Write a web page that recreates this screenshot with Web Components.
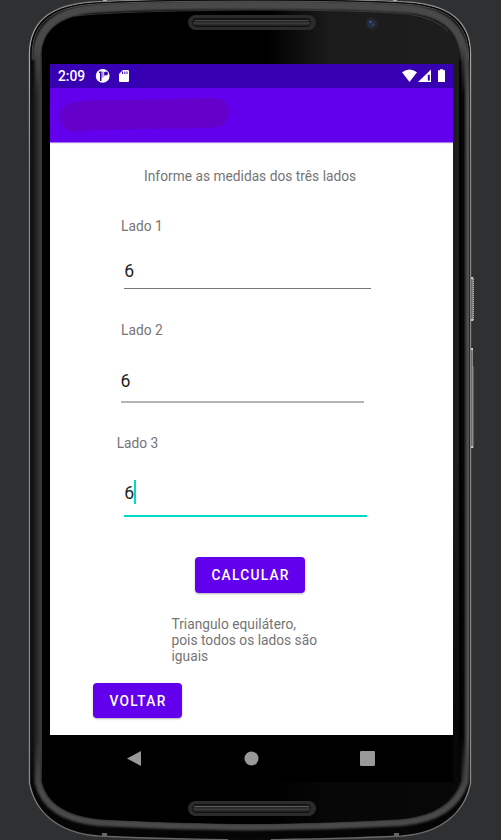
<!DOCTYPE html>
<html lang="pt-BR">
<head>
<meta charset="utf-8">
<title>Triângulo</title>
<style>
html,body{margin:0;width:501px;height:840px;overflow:hidden;background:#2f3032;font-family:Roboto,sans-serif}
</style>
</head>
<body>
<phone-frame>
  <status-bar>2:09</status-bar>
  <app-bar></app-bar>
  <triangle-form></triangle-form>
  <nav-bar></nav-bar>
</phone-frame>
<script>
const define = (name, html) => customElements.define(name, class extends HTMLElement {
  constructor() {
    super();
    const t = document.createElement('template');
    t.innerHTML = html;
    this.attachShadow({mode: 'open'}).append(t.content.cloneNode(true));
  }
});

define('phone-frame', `
<style>
:host{display:block;position:relative;box-sizing:border-box;width:501px;height:840px;padding:64px 48px 58px 50px;overflow:hidden}
svg{position:absolute;left:0;top:0}
.screen{position:relative;display:flex;flex-direction:column;width:403px;height:718px}
</style>
<svg width="501" height="840" viewBox="0 0 501 840">
  <defs>
    <linearGradient id="edge" x1="0" x2="0" y1="0" y2="1">
      <stop offset="0" stop-color="#858585"/><stop offset=".06" stop-color="#a8a8a8"/><stop offset=".2" stop-color="#8b8b8b"/><stop offset=".93" stop-color="#8b8b8b"/><stop offset="1" stop-color="#666"/>
    </linearGradient>
    <linearGradient id="gloss"><stop offset=".54" stop-color="#000"/><stop offset=".69" stop-color="#1b1b1b"/><stop offset="1" stop-color="#1d1d1d"/></linearGradient>
    <linearGradient id="fade" x1="0" x2="0" y1="0" y2="1"><stop offset=".55" stop-color="#000" stop-opacity="0"/><stop offset=".9" stop-color="#000" stop-opacity=".75"/></linearGradient>
    <linearGradient id="slot" x1="0" x2="0" y1="0" y2="1"><stop offset="0" stop-color="#111"/><stop offset=".45" stop-color="#2b2b2b"/><stop offset=".6" stop-color="#3b3b3b"/><stop offset="1" stop-color="#151515"/></linearGradient>
    <linearGradient id="btn"><stop offset="0" stop-color="#555"/><stop offset=".5" stop-color="#8a8a8a"/><stop offset="1" stop-color="#4a4a4a"/></linearGradient>
    <linearGradient id="railL"><stop offset="0" stop-color="#161616"/><stop offset=".2" stop-color="#111"/><stop offset=".75" stop-color="#323232"/><stop offset="1" stop-color="#3c3c3c"/></linearGradient>
    <linearGradient id="railR"><stop offset="0" stop-color="#000"/><stop offset=".4" stop-color="#060606"/><stop offset=".65" stop-color="#3c3c3c"/><stop offset=".85" stop-color="#595959"/><stop offset="1" stop-color="#111"/></linearGradient>
    <linearGradient id="ends" gradientUnits="userSpaceOnUse" x1="0" x2="0" y1="45" y2="790"><stop offset="0" stop-color="#000"/><stop offset=".07" stop-color="#fff"/><stop offset=".93" stop-color="#fff"/><stop offset="1" stop-color="#000"/></linearGradient>
    <mask id="railMask" maskUnits="userSpaceOnUse" x="0" y="0" width="501" height="840"><rect width="501" height="840" fill="url(#ends)"/></mask>
    <filter id="soft"><feGaussianBlur stdDeviation="1.1"/></filter>
    <clipPath id="body"><path d="M29.500 53C30 20 52 4 95 2Q150-1 250-1Q350-1 405 2C448 4 470 20 470.500 53V783C465 812 442 833 402 836Q340 839 250 840Q160 839 98 836C58 833 35 812 29.500 783Z"/></clipPath>
  </defs>
  <path d="M103 0h4v3h-4zM393 0h4v3h-4z" fill="#bbb"/>
  <path d="M471 277h3v44h-3z" fill="url(#btn)"/>
  <path d="M473.500 279V320" stroke="#aaa" stroke-dasharray="1 1"/>
  <path d="M471 348h2v18h1v82h-3z" fill="url(#btn)"/>
  <path d="M471 277h2v2h-2zM471 319h2v2h-2zM471 348h2v2h-2zM471 446h2v2h-2z" fill="#ccc"/>
  <path d="M29.500 53C30 20 52 4 95 2Q150-1 250-1Q350-1 405 2C448 4 470 20 470.500 53V783C465 812 442 833 402 836Q340 839 250 840Q160 839 98 836C58 833 35 812 29.500 783Z" fill="#050505" stroke="url(#edge)" stroke-width="1.300"/>
  <g clip-path="url(#body)">
    <path d="M36.500 60C37 27 57 11 96 8.500Q150 5 250 5Q350 5 404 8.500C443 11 463 27 465 60" fill="none" stroke="#484848" stroke-width="9" filter="url(#soft)"/>
    <path d="M32 60V53C33 22 54 6.500 95 4Q150 1 250 1Q350 1 405 4C446 6.500 467 22 468.500 53V60" fill="none" stroke="#606060" stroke-width=".8"/>
    <path d="M31 60V53C32 21 53 5.500 95 3Q150 0 250 0Q350 0 405 3C447 5.500 468 21 469.500 53V60" fill="none" stroke="#080808" stroke-width="1"/>
    <path d="M38 58V782C43 804 61 819 98 822.500Q160 826 250 827Q340 826 402 822.500C440 819 458 804 465 782V58" fill="none" stroke="#484848" stroke-width="7" filter="url(#soft)"/>
    <g mask="url(#railMask)">
      <rect x="30" y="45" width="12" height="745" fill="url(#railL)"/>
      <rect x="459" y="45" width="11" height="745" fill="url(#railR)"/>
    </g>
    <path d="M42 54C42 30 62 15 96 13.500Q150 10 250 10Q350 10 404 13.500C439 15 459 30 459 54V780C454 802 436 815 402 819Q340 823 250 824Q160 823 98 819C65 815 46 802 42 780Z" fill="url(#gloss)"/>
    <path d="M42 54C42 30 62 15 96 13.500Q150 10 250 10Q350 10 404 13.500C439 15 459 30 459 54V780C454 802 436 815 402 819Q340 823 250 824Q160 823 98 819C65 815 46 802 42 780Z" fill="url(#fade)"/>
    <path d="M75 16Q120 11 250 10Q360 10 408 14Q435 18 448 31" fill="none" stroke="#484848" stroke-width=".7"/>
  </g>
  <path d="M102 833h5v4h-5zM394 833h5v4h-5z" fill="#666"/>
  <rect x="188" y="15" width="128" height="15" rx="7.500" fill="#2b2b2b"/>
  <rect x="192.500" y="18.500" width="118" height="8" rx="4" fill="url(#slot)" stroke="#111"/>
  <path d="M195 20.500H309" stroke="#444"/>
  <rect x="188" y="801" width="128" height="15" rx="7.500" fill="#2b2b2b"/>
  <rect x="192.500" y="804.500" width="118" height="8" rx="4" fill="url(#slot)" stroke="#111"/>
  <path d="M194 806.500H309" stroke="#5c5c5c"/>
  <circle cx="372" cy="23.500" r="6.500" fill="#232323"/><circle cx="371.500" cy="23.500" r="4.500" fill="#252b43"/>
  <circle cx="370.500" cy="22" r="1.200" fill="#48588a"/><circle cx="373" cy="24.500" r="1" fill="#3d4a75"/>
  <rect x="228" y="838" width="43" height="2" rx="1" fill="#080808"/>
</svg>
<div class="screen"><slot></slot></div>`);

define('status-bar', `
<style>
:host{display:flex;align-items:center;box-sizing:border-box;height:24px;padding:0 7px 0 8px;background:#3700b3;color:#fff;font:500 13.800px/24px Roboto,sans-serif}
.time{width:37px;white-space:nowrap}
.sp{flex:1}
svg{display:block;flex:none}
</style>
<span class="time"><slot></slot></span>
<svg width="36" height="24" viewBox="0 0 36 24"><circle cx="7.700" cy="11.900" r="6.900" fill="#fff"/><path d="M4 7.500H6.500V17H5V9H4z" fill="#3700b3"/><path d="M6.500 7.500H8.500V13.500H6.500zM9 8h1v4H9z" fill="#3700b3" opacity=".45"/><circle cx="11" cy="9.500" r="1.900" fill="#3700b3"/><path d="M28 6h5q1 0 1 1v10q0 1-1 1h-8q-1 0-1-1V10z" fill="#fff"/><path d="M27.500 7.500v2.500M29.800 7.500v2.500M32 7.500v2.500" stroke="#3700b3"/></svg>
<span class="sp"></span>
<svg width="44" height="24" viewBox="0 0 44 24"><path d="M0 8.300Q7.500 2.800 15 8.300L7.500 18z" fill="#fff"/><path d="M16 18L29 5.500V18z" fill="#fff"/><path d="M25.800 10.800H27.800V16.600H25.800z" fill="#3700b3"/><path d="M36 6.300h2V5.200h3.300v1.100H43V18H36z" fill="#fff"/></svg>`);

define('app-bar', `
<style>
:host{display:block;height:54px;background:#6200ee;border-bottom:1px solid #ad78f2;box-shadow:0 1px 1px #00000012;position:relative;z-index:1}
svg{display:block}
</style>
<svg width="403" height="54" viewBox="0 0 403 54"><path d="M9.500 28Q11 16 24 14L46 12L105 11.500L162 9.800Q178 10 179 23Q178 38 163 40L96 41L45 42L26 44Q11 44 9.500 28Z" fill="#6500ca"/></svg>`);

define('field-label', `
<style>
:host{display:block;height:16px;font:400 13.730px/16px Roboto,sans-serif;letter-spacing:.02px;color:#757575;white-space:nowrap}
</style><slot></slot>`);

define('side-input', `
<style>
:host{display:flex;align-items:flex-start;justify-content:flex-start;box-sizing:border-box;border-bottom:1px solid #777;font:400 17.650px/24px Roboto,sans-serif;color:#1f1f1f}
:host([faint]){border-bottom:2px solid #b4b4b4}
:host([focused]){border-bottom:2px solid #03dac5}
:host([focused]) span{padding-top:1px}
i{display:none;width:2px;height:24px;background:#03dac5}
:host([focused]) i{display:block}
</style><span><slot></slot></span><i></i>`);

define('material-button', `
<style>
:host{display:flex;align-items:center;justify-content:center;box-sizing:border-box;height:35px;border-radius:4px;background:#6200ee;box-shadow:0 1px 2px #0000004d;color:#fff;font:500 13.730px/16px Roboto,sans-serif;letter-spacing:1.270px;white-space:nowrap}
span{margin-right:-1.200px}
</style><span><slot></slot></span>`);

define('triangle-form', `
<style>
:host{display:flex;flex-direction:column;align-items:flex-start;height:592px;background:#fff}
.title{margin:25px 0 0 94px}
.l1{margin:34px 0 0 71px}
.f1{margin:25px 0 0 74.300px;width:246.700px;height:30px}
.l2{margin:33px 0 0 71px}
.f2{margin:31px 0 0 70.500px;width:243.500px;height:34px}
.l3{margin:32px 0 0 66.700px}
.f3{margin:29px 0 0 74.300px;width:242.700px;height:37px}
.calc{margin:40px 0 0 145px;width:110px;height:36px}
.result{margin:23px 0 0 121.500px;width:148px;height:48px;white-space:normal}
.back{margin:19px 0 0 43px;width:89px}
</style>
<field-label class="title">Informe as medidas dos três lados</field-label>
<field-label class="l1">Lado 1</field-label><side-input class="f1">6</side-input>
<field-label class="l2">Lado 2</field-label><side-input class="f2" faint>6</side-input>
<field-label class="l3">Lado 3</field-label><side-input class="f3" focused>6</side-input>
<material-button class="calc">CALCULAR</material-button>
<field-label class="result">Triangulo equilátero, pois todos os lados são iguais</field-label>
<material-button class="back">VOLTAR</material-button>`);

define('nav-bar', `
<style>
:host{display:flex;align-items:center;box-sizing:border-box;height:47px;background:#000}
svg{display:block}
</style>
<svg width="403" height="47" viewBox="0 0 403 47" fill="#999"><path d="M77 23.500L91 16V31z"/><circle cx="201.500" cy="23.500" r="7"/><rect x="310" y="16" width="15" height="15" rx="1.200"/></svg>`);
</script>
</body>
</html>
